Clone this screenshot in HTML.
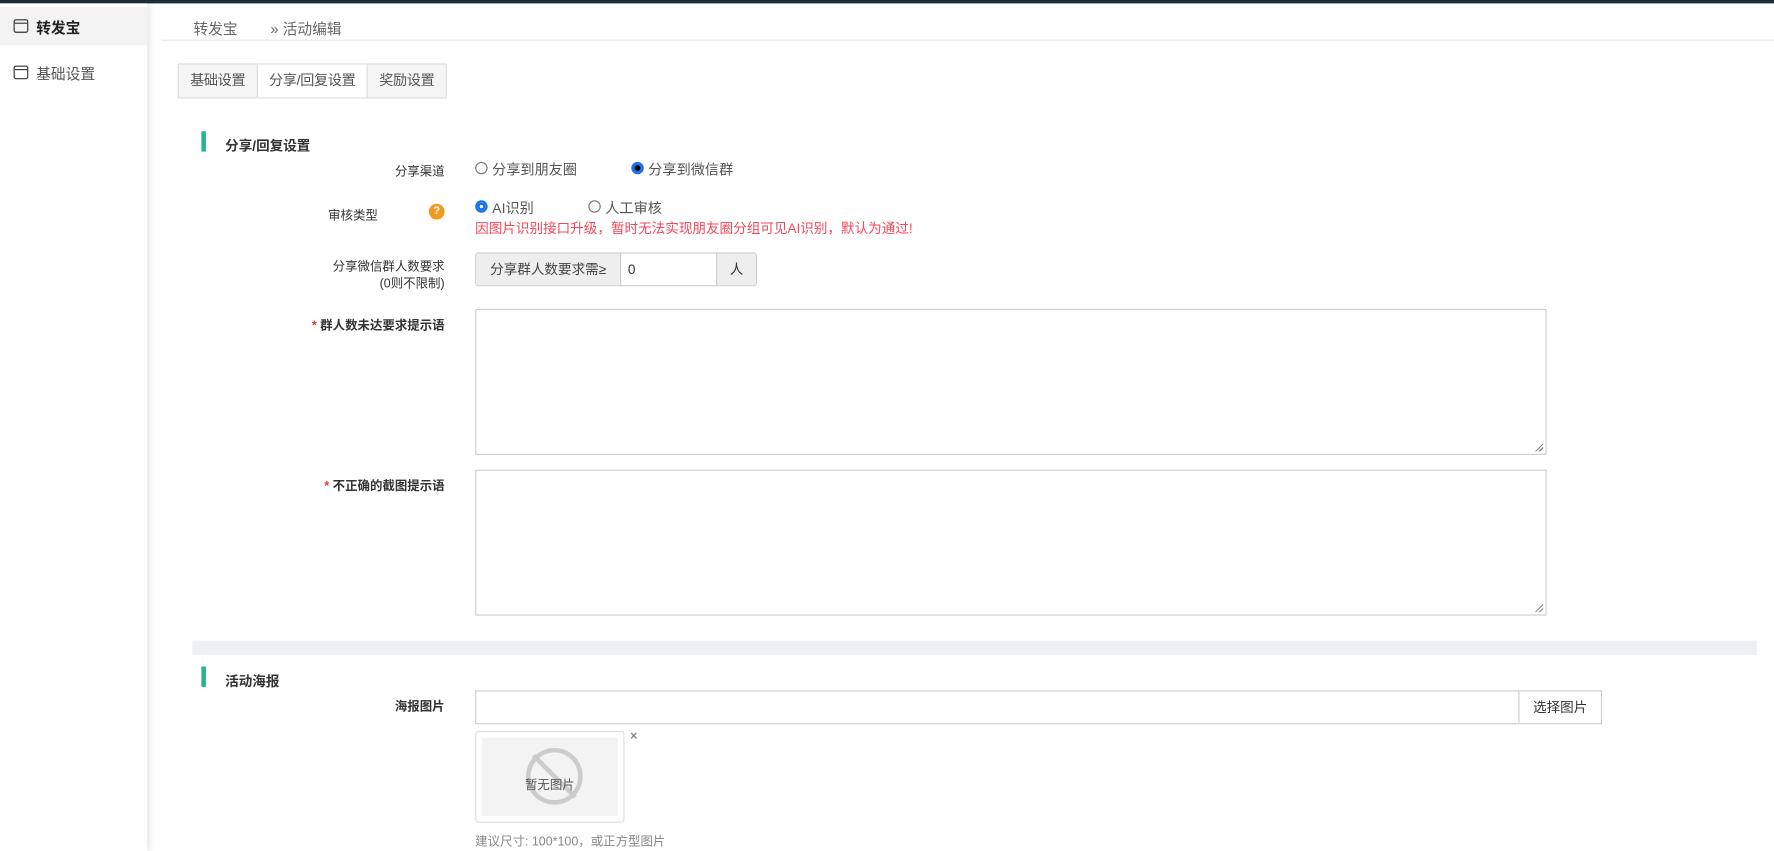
<!DOCTYPE html>
<html><head><meta charset="utf-8"><style>
*{box-sizing:border-box;margin:0;padding:0}
html,body{width:1774px;height:851px;overflow:hidden;background:#fff}
body{font-family:"Liberation Sans","Noto Sans CJK SC",sans-serif;color:#333;font-size:12px;position:relative}
#w{position:absolute;left:0;top:0;width:1568px;height:752px;transform:scale(1.13138,1.13165);transform-origin:0 0}
.top{position:absolute;left:0;top:0;width:1568px;height:3px;background:#1f2b3a}
.side{position:absolute;left:0;top:3px;width:130px;height:749px;background:#fff;box-shadow:2px 0 6px rgba(0,0,0,.12)}
.si{height:34px;display:flex;align-items:center;padding-left:12px;font-size:13px;color:#555}
.si.act{background:#f3f3f3;font-weight:bold;color:#222}
.si i{width:13px;height:12px;border:1.5px solid #333;border-radius:2px;margin-right:7px;position:relative}
.si i:after{content:"";position:absolute;left:0;right:0;top:2px;border-top:1.5px solid #333}
.abs{position:absolute}
.crumb{left:143px;top:6px;width:1425px;height:30px;border-bottom:1px solid #e8e8e8;font-size:13px;color:#666}
.tabs{left:157px;top:56px;display:flex;height:31px}
.tab{border:1px solid #ddd;background:#f5f5f5;padding:0 10px;line-height:29px;font-size:12.5px;color:#555;margin-right:-1px;letter-spacing:-0.3px}
.tab.on{background:#fff}
.sec{font-weight:bold;font-size:12px;color:#333}
.bar{width:4px;height:18px;background:#26b38f}
.lbl{text-align:right;width:230px;font-size:11px;color:#333}
.lblb{font-weight:bold}
.radio{display:inline-flex;align-items:center;font-size:12.5px;color:#555}
.radio b{width:11px;height:11px;border:1px solid #777;border-radius:50%;margin-right:4px;display:inline-block}
.radio b.on{border:3px solid #1a73e8;background:#000}
.radio b.on2{border:2px solid #1a73e8;background:#fff;box-shadow:inset 0 0 0 2px #1a73e8}
.ta{border:1px solid #ccc;background:#fff}
.ta:after{content:"";position:absolute;right:2px;bottom:2px;width:7px;height:7px;background:linear-gradient(135deg,transparent 45%,#888 45%,#888 55%,transparent 55%,transparent 70%,#888 70%,#888 80%,transparent 80%)}
</style></head><body><div id="w">
<div class="top"></div>
<div class="side">
<div class="si act" style="margin-top:3px"><i></i>转发宝</div>
<div class="si" style="margin-top:7px"><i></i>基础设置</div>
</div>
<div class="abs crumb"><span style="position:absolute;left:28px;top:9px">转发宝</span><span style="position:absolute;left:96px;top:9px">» 活动编辑</span></div>
<div class="abs tabs"><div class="tab">基础设置</div><div class="tab on">分享/回复设置</div><div class="tab">奖励设置</div></div>

<div class="abs bar" style="left:178px;top:116px"></div>
<div class="abs sec" style="left:199px;top:120px">分享/回复设置</div>

<div class="abs lbl" style="left:163px;top:143px">分享渠道</div>
<div class="abs radio" style="left:420px;top:139px"><b></b>分享到朋友圈</div>
<div class="abs radio" style="left:558px;top:139px"><b class="on"></b>分享到微信群</div>

<div class="abs lbl" style="left:104px;top:182px">审核类型</div>
<div class="abs" style="left:379px;top:180px;width:14px;height:14px;border-radius:50%;background:#f39a1e;color:#fff;font-size:10px;font-weight:bold;text-align:center;line-height:14px">?</div>
<div class="abs radio" style="left:420px;top:173px"><b class="on2"></b>AI识别</div>
<div class="abs radio" style="left:520px;top:173px"><b></b>人工审核</div>
<div class="abs" style="left:420px;top:193px;font-size:12px;color:#f5475a">因图片识别接口升级，暂时无法实现朋友圈分组可见AI识别，默认为通过!</div>

<div class="abs lbl" style="left:163px;top:229px;line-height:15px">分享微信群人数要求<br>(0则不限制)</div>
<div class="abs" style="left:420px;top:223px;width:249px;height:30px;border:1px solid #ccc;border-radius:3px;display:flex">
<div style="width:128px;background:#eee;border-right:1px solid #ccc;line-height:28px;text-align:center;font-size:12px;color:#444">分享群人数要求需≥</div>
<div style="flex:1;padding-left:6px;line-height:28px;font-size:12px">0</div>
<div style="width:35px;background:#eee;border-left:1px solid #ccc;line-height:28px;text-align:center;font-size:12px">人</div>
</div>

<div class="abs lbl lblb" style="left:163px;top:279px"><span style="color:#e33">*</span> 群人数未达要求提示语</div>
<div class="abs ta" style="left:420px;top:273px;width:947px;height:129px"></div>
<div class="abs lbl lblb" style="left:163px;top:421px"><span style="color:#e33">*</span> 不正确的截图提示语</div>
<div class="abs ta" style="left:420px;top:415px;width:947px;height:129px"></div>

<div class="abs" style="left:170px;top:566px;width:1383px;height:13px;background:#eef1f4"></div>
<div class="abs bar" style="left:178px;top:589px"></div>
<div class="abs sec" style="left:199px;top:593px">活动海报</div>
<div class="abs lbl lblb" style="left:163px;top:616px">海报图片</div>
<div class="abs" style="left:420px;top:610px;width:996px;height:30px;border:1px solid #ccc;display:flex">
<div style="flex:1"></div><div style="width:73px;border-left:1px solid #ccc;background:#fff;line-height:28px;text-align:center;font-size:12px">选择图片</div></div>
<div class="abs" style="left:420px;top:646px;width:132px;height:81px;border:1px solid #ddd;border-radius:3px;padding:5px">
<div style="width:120px;height:69px;background:#f3f3f3;position:relative">
<div style="position:absolute;left:39px;top:9px;width:50px;height:50px;border:4px solid #ccc;border-radius:50%"></div>
<div style="position:absolute;left:62px;top:8px;width:4px;height:52px;background:#ccc;transform:rotate(-45deg)"></div>
<div style="position:absolute;left:0;width:120px;top:33px;text-align:center;font-size:11px;color:#555">暂无图片</div>
</div></div>
<div class="abs" style="left:557px;top:645px;font-size:11px;color:#888;font-weight:bold">×</div>
<div class="abs" style="left:420px;top:735px;font-size:11px;color:#888">建议尺寸: 100*100，或正方型图片</div>
</div></body></html>
